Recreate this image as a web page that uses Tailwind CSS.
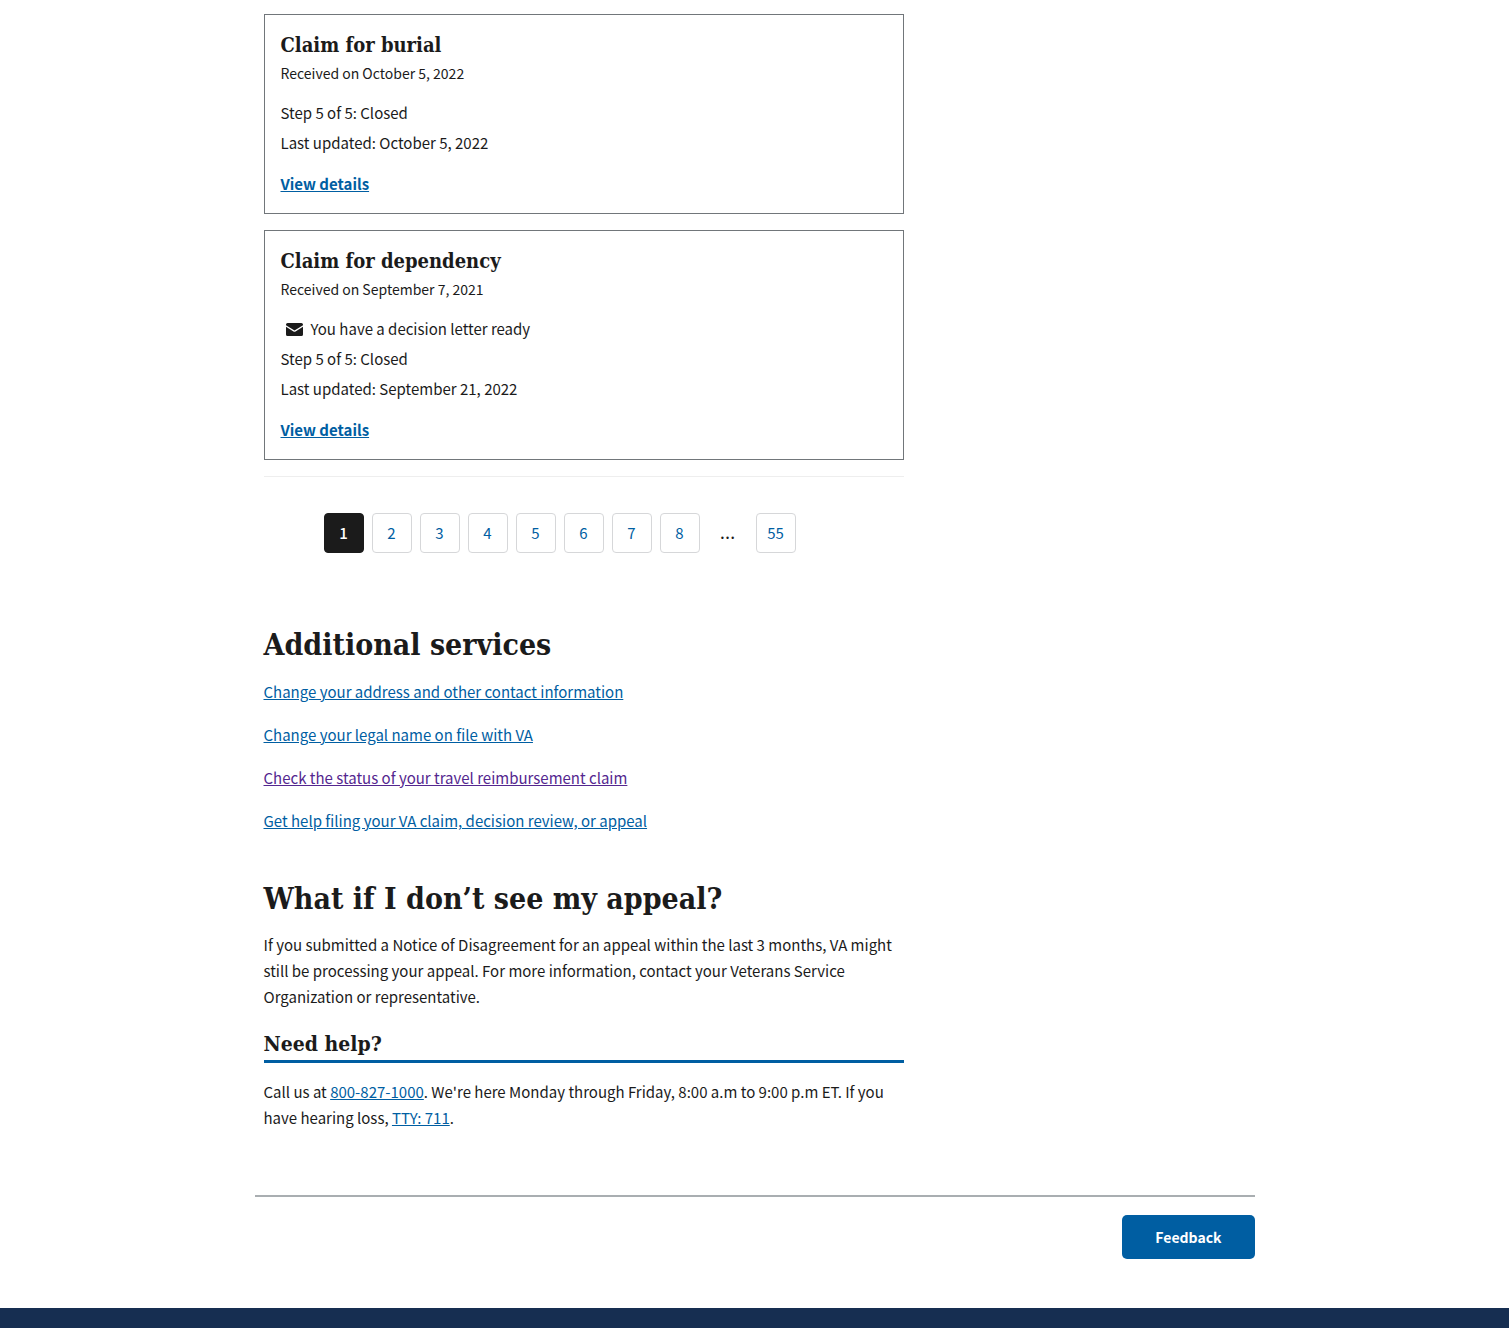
<!DOCTYPE html>
<html lang="en">
<head>
<meta charset="utf-8">
<meta name="viewport" content="width=device-width, initial-scale=1">
<title>Your claims and appeals</title>
<script src="https://cdn.jsdelivr.net/npm/@tailwindcss/browser@4"></script>
</head>
<body class="flex min-h-screen flex-col bg-white font-['Noto_Sans_CJK_SC',sans-serif] text-[15px] text-[#1b1b1b]">
<main class="mx-auto w-full max-w-[1000px] pt-3.5">
  <div class="mx-[9px] max-w-[640px]">
    <div class="flex flex-col gap-4">
      <article class="border border-[#71767a] p-4">
        <h3 class="font-['DejaVu_Serif_Condensed','DejaVu_Serif',serif] text-xl leading-7 font-bold">Claim for burial</h3>
        <p class="mt-0.5 text-sm leading-6">Received on October 5, 2022</p>
        <ul class="mt-[13px] leading-[30px]">
          <li>Step 5 of 5: Closed</li>
          <li>Last updated: October 5, 2022</li>
        </ul>
        <p class="mt-3 leading-[27px]"><a href="#" class="font-bold text-[#005ea2] underline">View details</a></p>
      </article>
      <article class="border border-[#71767a] p-4">
        <h3 class="font-['DejaVu_Serif_Condensed','DejaVu_Serif',serif] text-xl leading-7 font-bold">Claim for dependency</h3>
        <p class="mt-0.5 text-sm leading-6">Received on September 7, 2021</p>
        <ul class="mt-[13px] leading-[30px]">
          <li class="flex items-center">
            <svg class="mr-2 ml-[5px] h-[13px] w-[17px]" viewBox="0 0 17 13" aria-hidden="true"><path fill="#1b1b1b" d="M1.6 0h13.8Q17 0 17 1.6v.6L8.5 7.5 0 2.200v-.6Q0 0 1.600 0Z M0 3.700 7.500 8.500q1 .6 2 0L17 3.700v7.700Q17 13 15.400 13H1.600Q0 13 0 11.400Z"/></svg>
            You have a decision letter ready
          </li>
          <li>Step 5 of 5: Closed</li>
          <li>Last updated: September 21, 2022</li>
        </ul>
        <p class="mt-3 leading-[27px]"><a href="#" class="font-bold text-[#005ea2] underline">View details</a></p>
      </article>
    </div>
    <hr class="mt-4 border-[#eeeeee]">
    <nav aria-label="Pagination" class="mt-9 pl-[60px]">
      <ul class="flex gap-2 leading-[38px] text-[#005ea2]">
        <li><a href="#" aria-current="page" class="block size-10 rounded border border-[#1b1b1b] bg-[#1b1b1b] text-center font-medium text-white">1</a></li>
        <li><a href="#" class="block size-10 rounded border border-[#d6d7d9] text-center">2</a></li>
        <li><a href="#" class="block size-10 rounded border border-[#d6d7d9] text-center">3</a></li>
        <li><a href="#" class="block size-10 rounded border border-[#d6d7d9] text-center">4</a></li>
        <li><a href="#" class="block size-10 rounded border border-[#d6d7d9] text-center">5</a></li>
        <li><a href="#" class="block size-10 rounded border border-[#d6d7d9] text-center">6</a></li>
        <li><a href="#" class="block size-10 rounded border border-[#d6d7d9] text-center">7</a></li>
        <li><a href="#" class="block size-10 rounded border border-[#d6d7d9] text-center">8</a></li>
        <li class="w-10 text-center font-['Open_Sans',sans-serif] text-xl leading-[38px] text-[#1b1b1b]">…</li>
        <li><a href="#" class="block size-10 rounded border border-[#d6d7d9] text-center">55</a></li>
      </ul>
    </nav>
    <section class="mt-18">
      <h2 class="font-['DejaVu_Serif_Condensed','DejaVu_Serif',serif] text-3xl leading-10 font-bold">Additional services</h2>
      <ul class="mt-[13px] flex flex-col gap-4 leading-[27px]">
        <li><a href="#" class="text-[#005ea2] underline">Change your address and other contact information</a></li>
        <li><a href="#" class="text-[#005ea2] underline">Change your legal name on file with VA</a></li>
        <li><a href="#" class="text-[#54278f] underline">Check the status of your travel reimbursement claim</a></li>
        <li><a href="#" class="text-[#005ea2] underline">Get help filing your VA claim, decision review, or appeal</a></li>
      </ul>
    </section>
    <section class="mt-[45px]">
      <h2 class="font-['DejaVu_Serif_Condensed','DejaVu_Serif',serif] text-3xl leading-10 font-bold">What if I don’t see my appeal?</h2>
      <p class="mt-[13px] leading-[26px]">If you submitted a Notice of Disagreement for an appeal within the last 3 months, VA might still be processing your appeal. For more information, contact your Veterans Service Organization or representative.</p>
    </section>
    <section class="mt-[18px]">
      <h2 class="border-b-3 border-[#005ea2] font-['DejaVu_Serif_Condensed','DejaVu_Serif',serif] text-[21px] leading-8 font-bold">Need help?</h2>
      <p class="mt-4 leading-[26px]">Call us at <a href="tel:8008271000" class="text-[#005ea2] underline">800-827-1000</a>. We're here Monday through Friday, 8:00 a.m to 9:00 p.m ET. If you have hearing loss, <a href="tel:711" class="text-[#005ea2] underline">TTY: 711</a>.</p>
    </section>
  </div>
  <div class="mt-16 flex justify-end border-t-2 border-[#a9aeb1] pt-[18px]">
    <button type="button" class="h-11 rounded-[5px] bg-[#005ea2] px-[33px] text-sm font-bold text-white">Feedback</button>
  </div>
</main>
<footer class="mt-[49px] min-h-5 grow bg-[#162e51]"></footer>
</body>
</html>
